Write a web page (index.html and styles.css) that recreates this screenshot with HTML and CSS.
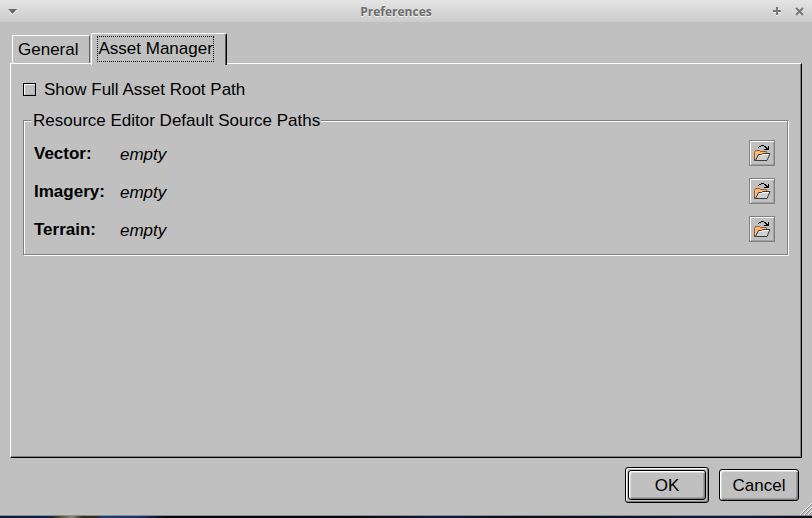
FILE: index.html
```html
<!DOCTYPE html>
<html lang="en">
<head>
<meta charset="utf-8">
<title>Preferences</title>
<link rel="stylesheet" href="styles.css">
</head>
<body>
<svg class="defs" aria-hidden="true">
  <symbol id="open-folder" viewBox="0 0 18 18">
    <path d="M5 4V3h1V2h2V1h3v1h2v1h1v1h1V2h1v4h-5V5h2V4h-1V3h-1V2H8v1H6v1z" fill="#000"/>
    <path d="M1.500 15.500v-7l1-2h4l1 1h6v3" fill="#ffb469" stroke="#9c5a26"/>
    <path d="M2.500 14V8.500h4l1 1h5" fill="none" stroke="#ffc080"/>
    <path d="M2.500 16.500L5.500 10.500h3l1-1h7.500l-3 7z" fill="#d0d0d0" stroke="#3c3c3c"/>
    <path d="M6 11.500h3l1-1h6" fill="none" stroke="#fff"/>
    <path d="M1.500 15v1.500h1" fill="none" stroke="#3c3c3c"/>
  </symbol>
</svg>
<div class="window">
  <header class="titlebar">
    <button class="title-button" aria-label="Window menu"><svg width="9" height="7" viewBox="0 0 9 7"><path d="M0 2h9L4.500 7z" fill="#fff"/><path d="M0 1h9L4.500 6z" fill="#6b6b6b"/></svg></button>
    <h1 class="title">Preferences</h1>
    <div class="title-actions">
      <button class="title-button" aria-label="Maximize"><svg width="8" height="9" viewBox="0 0 8 9"><path d="M3 1h2v3h3v2H5v3H3V6H0V4h3z" fill="#f4f4f4"/><path d="M3 0h2v3h3v2H5v3H3V5H0V3h3z" fill="#777"/></svg></button>
      <button class="title-button" aria-label="Close"><svg width="9" height="9" viewBox="0 0 9 9"><path d="M1 2l7 6M8 2L1 8" stroke="#f4f4f4" stroke-width="2"/><path d="M1 1l7 7M8 1L1 8" stroke="#777" stroke-width="2"/></svg></button>
    </div>
  </header>
  <main class="content">
    <div class="tabs" role="tablist">
      <button class="tab" role="tab" aria-selected="false">General</button>
      <button class="tab tab-active" role="tab" aria-selected="true"><span class="tab-focus">Asset Manager</span></button>
    </div>
    <section class="panel" role="tabpanel">
      <label class="check"><input type="checkbox"><span>Show Full Asset Root Path</span></label>
      <fieldset class="group">
        <legend>Resource Editor Default Source Paths</legend>
        <div class="path-row"><span class="path-name">Vector:</span><em>empty</em><button class="browse" aria-label="Browse vector path"><svg width="18" height="18"><use href="#open-folder"/></svg></button></div>
        <div class="path-row"><span class="path-name">Imagery:</span><em>empty</em><button class="browse" aria-label="Browse imagery path"><svg width="18" height="18"><use href="#open-folder"/></svg></button></div>
        <div class="path-row"><span class="path-name">Terrain:</span><em>empty</em><button class="browse" aria-label="Browse terrain path"><svg width="18" height="18"><use href="#open-folder"/></svg></button></div>
      </fieldset>
    </section>
  </main>
  <footer class="actions">
    <div class="default-frame"><button class="push">OK</button></div>
    <button class="push push-plain">Cancel</button>
    <svg class="grip" width="12" height="12" viewBox="0 0 12 12"><path d="M0 12L12 0M4 12l8-8M8 12l4-4" stroke="#fff"/><path d="M1 12L12 1M5 12l7-7M9 12l3-3" stroke="#808080"/></svg>
  </footer>
</div>
<div class="desktop"></div>
</body>
</html>
```
FILE: styles.css
```css
* { box-sizing: border-box; }

body {
  margin: 0;
  min-height: 100vh;
  display: flex;
  flex-direction: column;
  background: #c0c0c0;
  color: #000;
  font: 17px/20px "Liberation Sans", Arial, sans-serif;
}

button {
  margin: 0;
  padding: 0;
  color: inherit;
  font: inherit;
  background: #c0c0c0;
  border: 0;
}

svg { display: block; }

.defs { position: absolute; width: 0; height: 0; }

.window {
  flex: 1;
  display: flex;
  flex-direction: column;
  border-bottom: 1px solid #8c8c8c;
}

.titlebar {
  display: grid;
  grid-template-columns: 1fr auto 1fr;
  align-items: center;
  height: 22px;
  padding: 0 8px;
  background: linear-gradient(#e4e4e4, #cccccc);
}

.title {
  margin: 0 20px 0 0;
  padding-top: 2px;
  color: #6e6e6e;
  font: bold 12px/20px "Open Sans", sans-serif;
  text-shadow: 0 1px 0 #f0f0f0;
}

.title-button { background: none; justify-self: start; }

.title-actions {
  display: flex;
  justify-content: flex-end;
  gap: 14px;
}

.content {
  flex: 1;
  display: flex;
  flex-direction: column;
  padding: 11px 10px 0;
}

.tabs {
  position: relative;
  display: flex;
  align-items: flex-end;
  margin: 0 2px -2px;
}

.tab {
  height: 28px;
  margin-bottom: 2px;
  padding: 0 11px 0 5px;
  border: 1px solid #fff;
  border-right-color: #606060;
  border-bottom: 0;
  border-radius: 2px 2px 0 0;
}

.tab-active {
  height: 32px;
  margin: 0 0 0 1px;
  padding: 0 12px 2px 5px;
  border-right-color: #000;
  box-shadow: inset -1px 0 0 #606060;
}

.tab-focus {
  display: block;
  padding: 2px 0;
  border: 1px dotted #000;
}

.panel {
  flex: 1;
  padding: 14px 12px;
  border: 1px solid #fff;
  border-right-color: #000;
  border-bottom-color: #000;
  box-shadow: inset -1px -1px 0 #808080;
}

.check {
  display: flex;
  align-items: center;
  gap: 8px;
}

.check span { padding-top: 2px; }

.check input {
  appearance: none;
  width: 13px;
  height: 13px;
  margin: 0;
  border: 1px solid #000;
  box-shadow: inset 1px 1px 0 #fff, inset -1px -1px 0 #b0b0b0;
}

.group {
  min-width: 0;
  margin: 9px 1px 0 0;
  padding: 3px 12px 6px 10px;
  border: 1px solid #808080;
  box-shadow: 1px 1px 0 #fff, inset 1px 1px 0 #fff;
}

.group legend {
  margin-left: -3px;
  padding: 2px 1px 0 2px;
  background: #c0c0c0;
}

.path-row {
  display: grid;
  grid-template-columns: 86px 1fr 26px;
  align-items: center;
  height: 38px;
}

.path-name {
  padding-top: 2px;
  font-weight: bold;
}

.path-row em { padding-top: 4px; }

.browse {
  display: grid;
  place-items: center;
  height: 26px;
  border: 1px solid #808080;
  box-shadow: inset 1px 1px 0 #fff, inset -1px -1px 0 #a0a0a0;
}

.actions {
  position: relative;
  display: flex;
  justify-content: flex-end;
  align-items: center;
  gap: 10px;
  padding: 9px 13px 12px;
}

.default-frame {
  padding: 2px;
  border: 1px solid #000;
  border-radius: 3px;
  box-shadow: inset 1px 1px 0 #fff, inset -1px -1px 0 #808080;
}

.push {
  display: block;
  width: 78px;
  height: 30px;
  padding-top: 2px;
  border: 1px solid #000;
  border-radius: 3px;
  box-shadow: inset 1px 1px 0 #fff, inset 2px 2px 0 #dcdcdc, inset -1px -1px 0 #808080, inset -2px -2px 0 #a0a0a0;
}

.push-plain { width: 80px; height: 32px; }

.grip {
  position: absolute;
  right: 0;
  bottom: 0;
}

.desktop {
  height: 2px;
  background: linear-gradient(90deg, #071a38, #0a2450 53px, #30301c 54px, #88887c 72px, #302c18 82px, #302c18 99px, #1c3c78 100px, #163468 140px, #03060f 165px, #03060f 350px, #0a1c3c 440px, #040c1c 520px, #0a1c3c 740px, #050c1c);
}
```
